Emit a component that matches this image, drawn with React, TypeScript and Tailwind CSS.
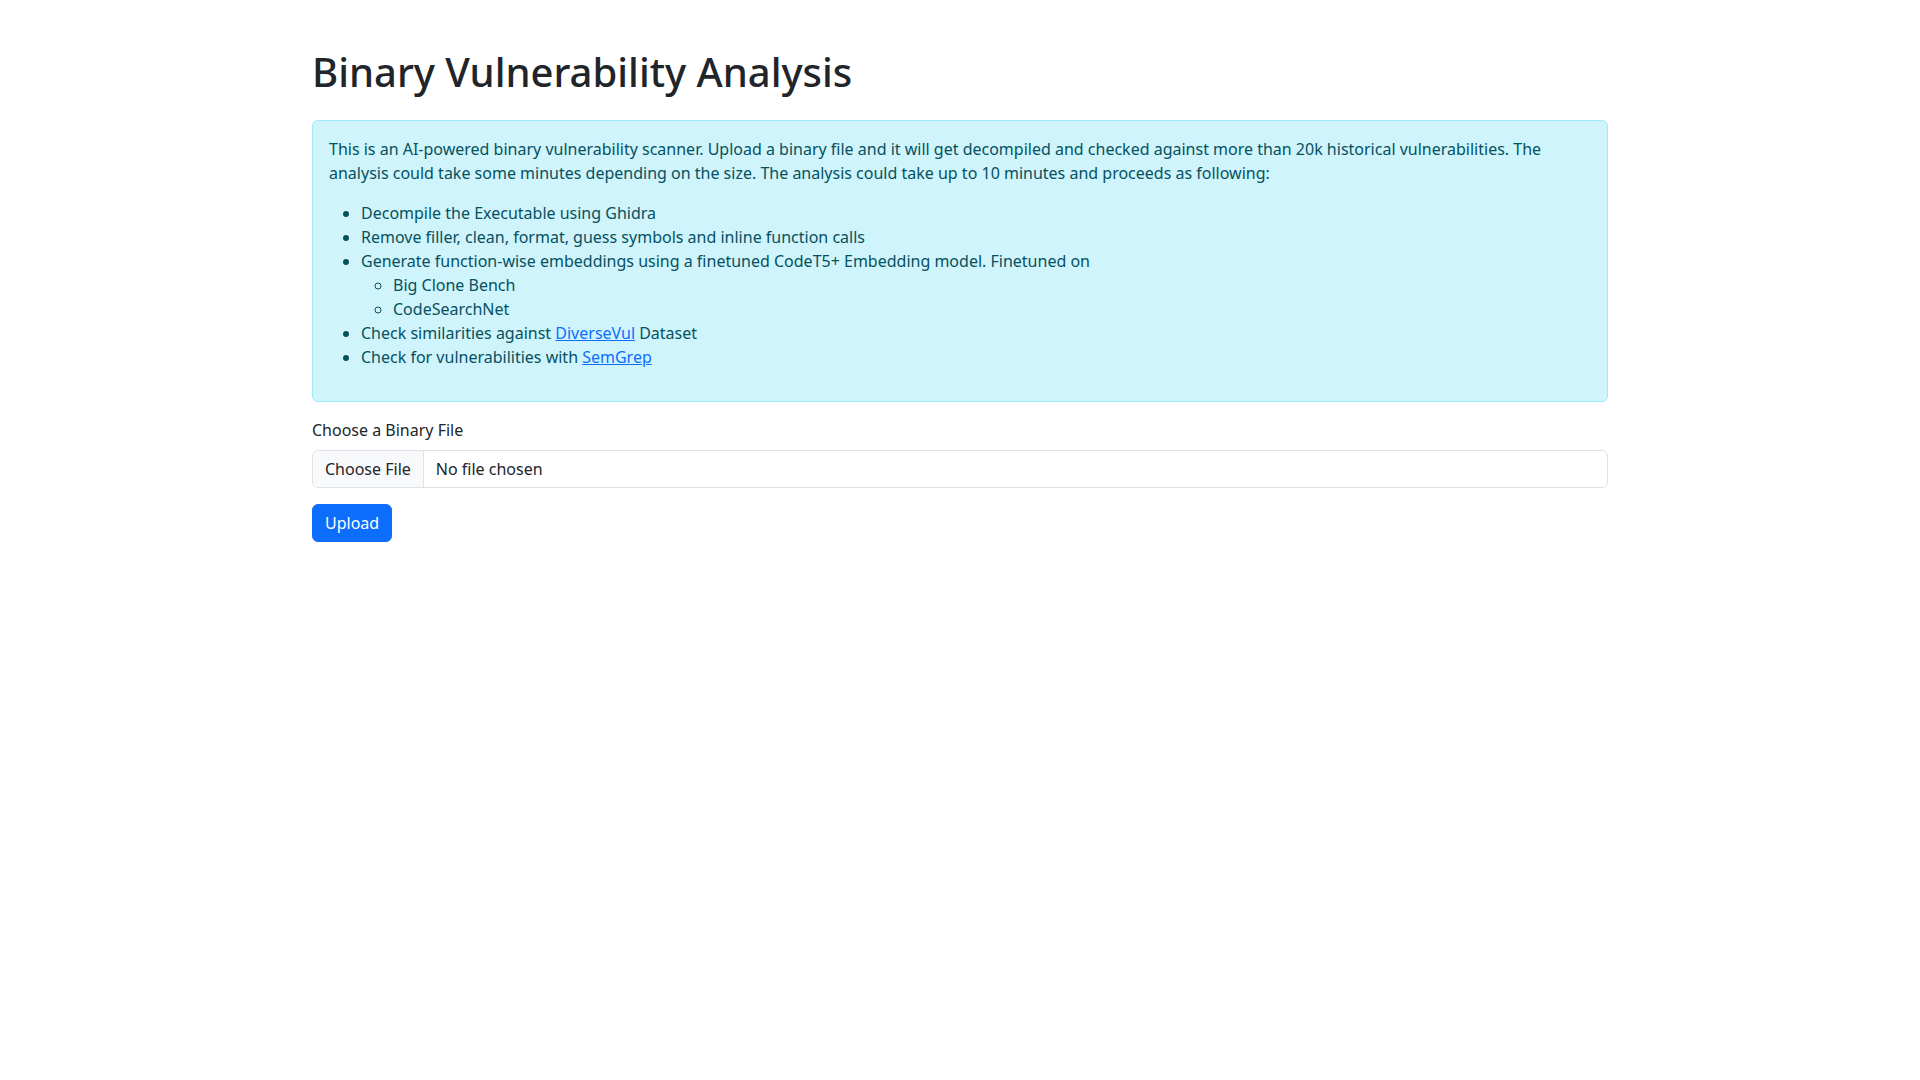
export default function App() {
  return (
    <div className="min-h-screen bg-white text-[#212529] text-base leading-6" style={{ fontFamily: '"Noto Sans", "Open Sans", sans-serif' }}>
      <div className="mx-auto w-full max-w-[1320px] px-3 mt-12">
        {/* TITLE */}
        <h1 className="text-[40px] leading-[48px] font-medium mb-6">Binary Vulnerability Analysis</h1>

        {/* INFO ALERT */}
        <div className="mb-4 rounded-md border border-[#9eeaf9] bg-[#cff4fc] p-4 text-[#055160]">
          <p className="mb-4">
            This is an AI-powered binary vulnerability scanner. Upload a binary file and it will get decompiled and checked against more than 20k historical vulnerabilities. The analysis could take some minutes depending on the size. The analysis could take up to 10 minutes and proceeds as following:
          </p>
          <ul className="mb-4 list-disc pl-8">
            <li>Decompile the Executable using Ghidra</li>
            <li>Remove filler, clean, format, guess symbols and inline function calls</li>
            <li>
              Generate function-wise embeddings using a finetuned CodeT5+ Embedding model. Finetuned on
              <ul className="list-[circle] pl-8">
                <li>Big Clone Bench</li>
                <li>CodeSearchNet</li>
              </ul>
            </li>
            <li>
              Check similarities against{" "}
              <a href="#" className="text-[#0d6efd] underline">DiverseVul</a> Dataset
            </li>
            <li>
              Check for vulnerabilities with{" "}
              <a href="#" className="text-[#0d6efd] underline">SemGrep</a>
            </li>
          </ul>
        </div>

        {/* FORM */}
        <div className="mb-4">
          <label className="mb-2 block">Choose a Binary File</label>
          <div className="flex h-[38px] w-full overflow-hidden rounded-md border border-[#dee2e6] bg-white">
            <div className="flex items-center border-r border-[#dee2e6] bg-[#f8f9fa] px-3">Choose File</div>
            <div className="flex items-center pl-3">No file chosen</div>
          </div>
        </div>
        <button className="h-[38px] rounded-md border border-[#0d6efd] bg-[#0d6efd] px-3 text-white">Upload</button>
      </div>
    </div>
  );
}
